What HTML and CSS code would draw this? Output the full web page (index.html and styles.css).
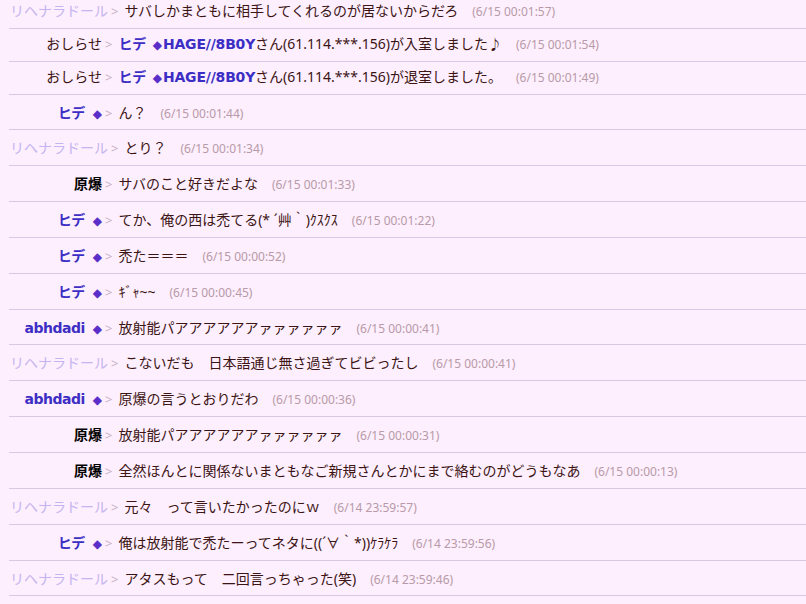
FILE: index.html
```html
<!DOCTYPE html>
<html lang="ja">
<head>
    <meta charset="UTF-8">
    <meta name="viewport" content="width=device-width, initial-scale=1.0">
    <title>チャットログ</title>
    <link rel="stylesheet" href="styles.css">
</head>
<body>
    <div class="log">
        <div class="row">
            <span class="name guest">リヘナラドール</span><span class="sep">&gt;</span><span class="msg">サバしかまともに相手してくれるのが居ないからだろ</span><span class="time">(6/15 00:01:57)</span>
        </div>
        <div class="row system">
            <span class="name notice">おしらせ</span><span class="sep">&gt;</span><span class="msg"><b class="user">ヒデ <span class="trip">◆</span>HAGE//8B0Y</b>さん(61.114.***.156)が入室しました♪</span><span class="time">(6/15 00:01:54)</span>
        </div>
        <div class="row system">
            <span class="name notice">おしらせ</span><span class="sep">&gt;</span><span class="msg"><b class="user">ヒデ <span class="trip">◆</span>HAGE//8B0Y</b>さん(61.114.***.156)が退室しました。</span><span class="time">(6/15 00:01:49)</span>
        </div>
        <div class="row">
            <span class="name user">ヒデ<span class="trip">◆</span></span><span class="sep">&gt;</span><span class="msg">ん？</span><span class="time">(6/15 00:01:44)</span>
        </div>
        <div class="row">
            <span class="name guest">リヘナラドール</span><span class="sep">&gt;</span><span class="msg">とり？</span><span class="time">(6/15 00:01:34)</span>
        </div>
        <div class="row">
            <span class="name member">原爆</span><span class="sep">&gt;</span><span class="msg">サバのこと好きだよな</span><span class="time">(6/15 00:01:33)</span>
        </div>
        <div class="row">
            <span class="name user">ヒデ<span class="trip">◆</span></span><span class="sep">&gt;</span><span class="msg">てか、俺の西は禿てる(* ´艸｀)ｸｽｸｽ</span><span class="time">(6/15 00:01:22)</span>
        </div>
        <div class="row">
            <span class="name user">ヒデ<span class="trip">◆</span></span><span class="sep">&gt;</span><span class="msg">禿た＝＝＝</span><span class="time">(6/15 00:00:52)</span>
        </div>
        <div class="row">
            <span class="name user">ヒデ<span class="trip">◆</span></span><span class="sep">&gt;</span><span class="msg">ｷﾞｬ~~</span><span class="time">(6/15 00:00:45)</span>
        </div>
        <div class="row">
            <span class="name user">abhdadi<span class="trip">◆</span></span><span class="sep">&gt;</span><span class="msg">放射能パアアアアアアァァァァァァ</span><span class="time">(6/15 00:00:41)</span>
        </div>
        <div class="row">
            <span class="name guest">リヘナラドール</span><span class="sep">&gt;</span><span class="msg">こないだも　日本語通じ無さ過ぎてビビったし</span><span class="time">(6/15 00:00:41)</span>
        </div>
        <div class="row">
            <span class="name user">abhdadi<span class="trip">◆</span></span><span class="sep">&gt;</span><span class="msg">原爆の言うとおりだわ</span><span class="time">(6/15 00:00:36)</span>
        </div>
        <div class="row">
            <span class="name member">原爆</span><span class="sep">&gt;</span><span class="msg">放射能パアアアアアアァァァァァァ</span><span class="time">(6/15 00:00:31)</span>
        </div>
        <div class="row">
            <span class="name member">原爆</span><span class="sep">&gt;</span><span class="msg">全然ほんとに関係ないまともなご新規さんとかにまで絡むのがどうもなあ</span><span class="time">(6/15 00:00:13)</span>
        </div>
        <div class="row">
            <span class="name guest">リヘナラドール</span><span class="sep">&gt;</span><span class="msg">元々　って言いたかったのにｗ</span><span class="time">(6/14 23:59:57)</span>
        </div>
        <div class="row">
            <span class="name user">ヒデ<span class="trip">◆</span></span><span class="sep">&gt;</span><span class="msg">俺は放射能で禿たーってネタに((´∀｀*))ｹﾗｹﾗ</span><span class="time">(6/14 23:59:56)</span>
        </div>
        <div class="row">
            <span class="name guest">リヘナラドール</span><span class="sep">&gt;</span><span class="msg">アタスもって　二回言っちゃった(笑)</span><span class="time">(6/14 23:59:46)</span>
        </div>
    </div>
</body>
</html>
```

FILE: styles.css
```css
* {
    box-sizing: border-box;
    margin: 0;
    padding: 0;
}
body {
    background: #fdeffd;
    color: #3c1414;
    font-family: "Noto Sans", "Noto Sans CJK JP", sans-serif;
    font-size: 14px;
    overflow: hidden;
}
.log {
    margin: -7px 0 0 9px;
}
.row {
    height: 35.85px;
    padding: 7px 0 0 1px;
    line-height: 21px;
    border-bottom: 1px solid #d8c8e4;
    white-space: nowrap;
    overflow: hidden;
}
.row.system {
    height: 32.85px;
    padding-top: 4px;
}
.name {
    display: inline-block;
    min-width: 92px;
    text-align: right;
}
.guest {
    color: #c4b4f0;
}
.notice {
    color: #3c1414;
}
.member {
    color: #000;
    font-weight: bold;
}
.user {
    color: #3c2ec4;
    font-weight: bold;
    font-family: "DejaVu Sans", "Noto Sans CJK JP", sans-serif;
    font-size: 14px;
    letter-spacing: -0.5px;
}
.msg .user {
    letter-spacing: -0.2px;
}
.trip {
    color: #5a2ec8;
    font-size: 12px;
    margin-left: 8px;
    font-family: "DejaVu Sans", sans-serif;
    font-weight: normal;
    letter-spacing: 0;
}
.msg .trip {
    margin: 0 1px 0 2px;
}
.sep {
    color: #c8b0c0;
    font-size: 13px;
    margin: 0 6px 0 3px;
}
.time {
    color: #b89aa8;
    font-size: 12px;
    margin-left: 14px;
}
```
